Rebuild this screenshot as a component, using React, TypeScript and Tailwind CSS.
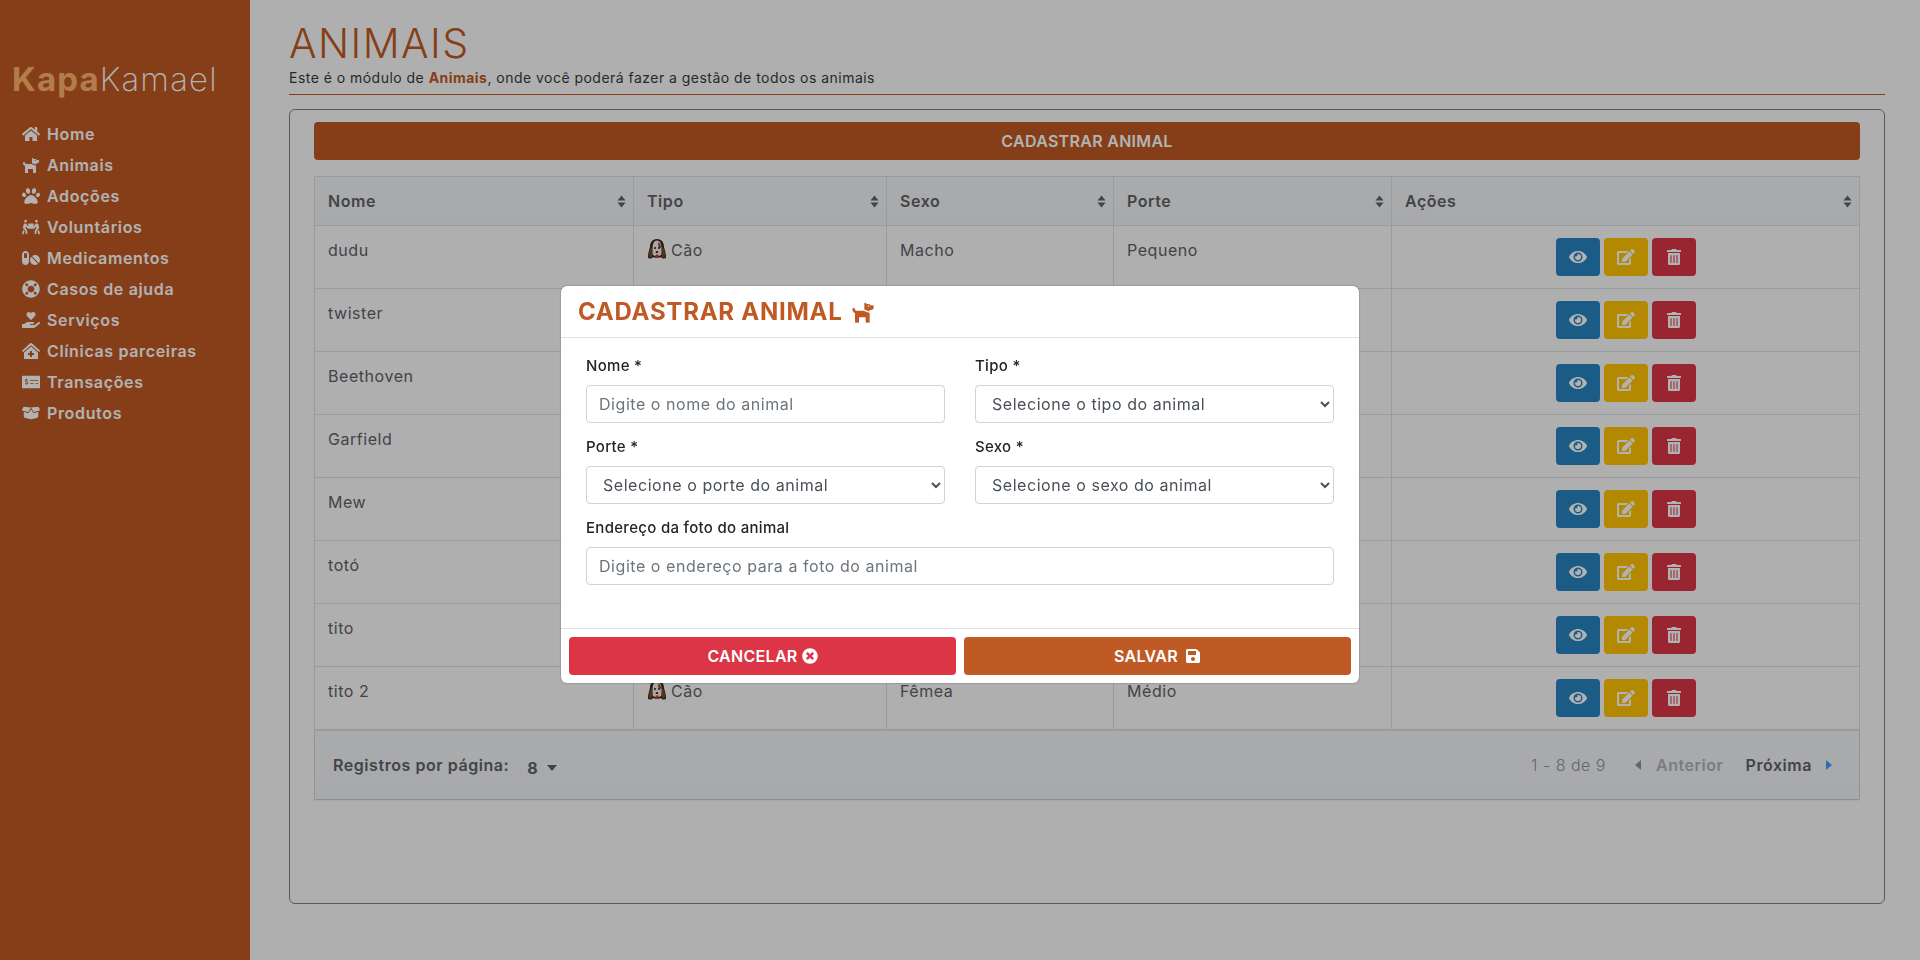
import React from "react";
import {
  FaHome, FaDog, FaPaw, FaPeopleCarry, FaPills, FaLifeRing, FaHandHoldingHeart, FaClinicMedical,
  FaMoneyCheckAlt, FaBoxOpen, FaEye, FaEdit, FaTrashAlt, FaSave, FaTimesCircle,
} from "react-icons/fa";

const nav = [
  { label: "Home", Icon: FaHome },
  { label: "Animais", Icon: FaDog },
  { label: "Adoções", Icon: FaPaw },
  { label: "Voluntários", Icon: FaPeopleCarry },
  { label: "Medicamentos", Icon: FaPills },
  { label: "Casos de ajuda", Icon: FaLifeRing },
  { label: "Serviços", Icon: FaHandHoldingHeart },
  { label: "Clínicas parceiras", Icon: FaClinicMedical },
  { label: "Transações", Icon: FaMoneyCheckAlt },
  { label: "Produtos", Icon: FaBoxOpen },
];

const rows = [
  ["dudu", "Cão", "Macho", "Pequeno"],
  ["twister", "Cão", "Macho", "Médio"],
  ["Beethoven", "Cão", "Macho", "Grande"],
  ["Garfield", "Gato", "Macho", "Médio"],
  ["Mew", "Gato", "Fêmea", "Pequeno"],
  ["totó", "Cão", "Macho", "Pequeno"],
  ["tito", "Cão", "Macho", "Médio"],
  ["tito 2", "Cão", "Fêmea", "Médio"],
];

const cols = ["w-[319px]", "w-[253px]", "w-[227px]", "w-[278px]", "flex-1"];
const heads = ["Nome", "Tipo", "Sexo", "Porte", "Ações"];

function SortIcon() {
  return (
    <svg width="9" height="13" viewBox="0 0 9 13" className="shrink-0">
      <path d="M4.5 0.5 L8.5 5.5 H0.5 Z M4.5 12.5 L8.5 7.5 H0.5 Z" fill="#606266" />
    </svg>
  );
}

function DogFace() {
  return (
    <svg width="20" height="22" viewBox="0 0 20 22" className="shrink-0">
      <path d="M10 1 C5 1 3 5 3 9 C2 12 1 16 1 19 C1 21 5 21 6 19 C7 20 13 20 14 19 C15 21 19 21 19 19 C19 16 18 12 17 9 C17 5 15 1 10 1 Z" fill="#3a2418" />
      <path d="M10 2.5 C7 2.5 5.5 6 5.5 10 L5.5 16 C6.5 19 13.5 19 14.5 16 L14.5 10 C14.5 6 13 2.5 10 2.5 Z" fill="#f2ede6" />
      <path d="M2.5 12 C2 15 2 18 2.5 19.5 C3.5 20 5 19.5 5.2 18 L5 9 Z M17.5 12 C18 15 18 18 17.5 19.5 C16.5 20 15 19.5 14.8 18 L15 9 Z" fill="#7b4a2a" />
      <path d="M11 4 C13 5 14 7 14 10 L11.5 9 Z" fill="#7b4a2a" />
      <circle cx="8" cy="10" r="1" fill="#222" />
      <circle cx="12" cy="10" r="1" fill="#222" />
      <ellipse cx="10" cy="14" rx="1.3" ry="1" fill="#222" />
      <circle cx="10" cy="18" r="1.7" fill="#d33" />
    </svg>
  );
}

function Field({ label, children }: { label: string; children: React.ReactNode }) {
  return (
    <div className="flex flex-col">
      <label className="h-[21px] text-[15px] leading-[21px] font-medium text-[#212529] tracking-[0.3px]">{label}</label>
      <div className="mt-[9px]">{children}</div>
    </div>
  );
}

const inputClass =
  "block w-full h-[38px] rounded-[4px] border border-[#ced4da] bg-white px-[12px] text-[16px] text-[#495057] tracking-[0.55px] placeholder:text-[#6c757d] outline-none";

function Select({ text }: { text: string }) {
  return (
    <select className={inputClass + " pl-[12px] pr-[2px]"} defaultValue="">
      <option value="">{text}</option>
    </select>
  );
}

export default function App() {
  return (
    <div className="relative flex h-screen w-full overflow-hidden bg-[#fbfbfb] font-['Inter','Noto_Sans',sans-serif]">
      <aside className="w-[250px] shrink-0 bg-[#c05a24] text-white">
        <div className="pt-[56px] pl-[12px] h-[122px] text-[33px] leading-[46px] tracking-[1.15px] whitespace-nowrap">
          <span className="font-bold text-[#ffb46a]">Kapa</span>
          <span className="font-extralight text-white">Kamael</span>
        </div>
        <ul className="flex flex-col gap-[7px] pl-[22px]">
          {nav.map(({ label, Icon }) => (
            <li key={label} className="flex h-[24px] items-center gap-[7px] text-[16px] font-semibold tracking-[0.65px] whitespace-nowrap">
              <Icon size={18} className="shrink-0" />
              <span>{label}</span>
            </li>
          ))}
        </ul>
      </aside>

      <main className="flex min-w-0 flex-1 flex-col pl-[39px] pr-[35px]">
        <div className="border-b border-[#c05a24] h-[95px]">
          <h1 className="pt-[24px] text-[41px] leading-[39px] font-light text-[#c05a24] tracking-[1.4px]">ANIMAIS</h1>
          <p className="mt-[5px] text-[14px] leading-[20px] text-[#3a3a3a] tracking-[0.47px]">
            Este é o módulo de <strong className="font-bold text-[#c05a24]">Animais</strong>, onde você poderá fazer a gestão de todos os animais
          </p>
        </div>

        <section className="mt-[14px] h-[795px] rounded-[6px] border border-[#808080] px-[24px] pt-[12px]">
          <button className="block h-[38px] w-[1546px] rounded-[4px] bg-[#c05a24] text-[16px] font-semibold text-white tracking-[0.3px]">
            CADASTRAR ANIMAL
          </button>

          <div className="mt-[16px] w-[1546px] border border-[#dcdfe6] text-[16px] text-[#606266]">
            <div className="flex h-[49px] border-b border-[#dcdfe6] bg-gradient-to-b from-[#f4f5f8] to-[#f1f3f6]">
              {heads.map((h, i) => (
                <div key={h} className={`${cols[i]} flex items-center justify-between px-[13px] pr-[7px] font-semibold tracking-[0.55px] ${i < 4 ? "border-r border-[#dcdfe6]" : ""}`}>
                  <span>{h}</span>
                  <SortIcon />
                </div>
              ))}
            </div>
            {rows.map((r) => (
              <div key={r[0]} className="flex h-[63px] border-b border-[#dcdfe6]">
                <div className={`${cols[0]} border-r border-[#dcdfe6] pl-[13px] pt-[12px] leading-[24px] tracking-[0.55px]`}>{r[0]}</div>
                <div className={`${cols[1]} flex items-start gap-[4px] border-r border-[#dcdfe6] pl-[13px] pt-[12px] leading-[24px] tracking-[0.55px]`}>
                  <DogFace />
                  <span>{r[1]}</span>
                </div>
                <div className={`${cols[2]} border-r border-[#dcdfe6] pl-[13px] pt-[12px] leading-[24px] tracking-[0.55px]`}>{r[2]}</div>
                <div className={`${cols[3]} border-r border-[#dcdfe6] pl-[13px] pt-[12px] leading-[24px] tracking-[0.55px]`}>{r[3]}</div>
                <div className="flex flex-1 items-start justify-center gap-[4px] pt-[12px]">
                  <button className="flex h-[38px] w-[44px] items-center justify-center rounded-[4px] bg-[#2684bf] text-white"><FaEye size={18} /></button>
                  <button className="flex h-[38px] w-[44px] items-center justify-center rounded-[4px] bg-[#ffc400] text-white"><FaEdit size={18} /></button>
                  <button className="flex h-[38px] w-[44px] items-center justify-center rounded-[4px] bg-[#dc3545] text-white"><FaTrashAlt size={16} /></button>
                </div>
              </div>
            ))}
            <div className="flex h-[70px] items-center justify-between border-t-2 border-[#dcdfe6] -mt-px bg-gradient-to-b from-[#f4f5f8] to-[#f1f3f6] pl-[18px] pr-[27px] shadow-[0_1px_2px_rgba(0,0,0,0.15)]">
              <div className="flex items-center font-semibold tracking-[0.55px]">
                <span>Registros por página:</span>
                <span className="ml-[18px] mt-[6px] font-bold text-[#606266]">8</span>
                <span className="ml-[9px] mt-[6px] h-0 w-0 border-x-[5.5px] border-t-[6px] border-x-transparent border-t-[#606266]" />
              </div>
              <div className="flex items-center">
                <span className="font-light tracking-[0.5px] text-[#909399]">1 - 8 de 9</span>
                <span className="ml-[29px] h-0 w-0 border-y-[5.5px] border-r-[6px] border-y-transparent border-r-[#909399]" />
                <span className="ml-[15px] font-semibold tracking-[0.55px] text-[#b0b2b6]">Anterior</span>
                <span className="ml-[22px] font-semibold tracking-[0.55px] text-[#606266]">Próxima</span>
                <span className="ml-[14px] h-0 w-0 border-y-[5.5px] border-l-[6px] border-y-transparent border-l-[#409eff]" />
              </div>
            </div>
          </div>
        </section>
      </main>

      <div className="fixed inset-0 flex items-start justify-center bg-black/30 pt-[286px]">
        <div className="w-[798px] rounded-[6px] bg-white shadow-[0_0_2px_rgba(0,0,0,0.4)]">
          <div className="flex h-[52px] items-center gap-[8px] border-b border-[#dee2e6] pl-[17px] text-[24px] font-bold text-[#c05a24] tracking-[0.75px]">
            <span>CADASTRAR ANIMAL</span>
            <FaDog size={24} />
          </div>
          <div className="grid grid-cols-2 gap-x-[30px] gap-y-[13px] px-[25px] pt-[17px] h-[291px] content-start border-b border-[#dee2e6]">
            <Field label="Nome *"><input className={inputClass} placeholder="Digite o nome do animal" /></Field>
            <Field label="Tipo *"><Select text="Selecione o tipo do animal" /></Field>
            <Field label="Porte *"><Select text="Selecione o porte do animal" /></Field>
            <Field label="Sexo *"><Select text="Selecione o sexo do animal" /></Field>
            <div className="col-span-2">
              <Field label="Endereço da foto do animal"><input className={inputClass} placeholder="Digite o endereço para a foto do animal" /></Field>
            </div>
          </div>
          <div className="flex gap-[8px] px-[8px] pt-[8px] pb-[8px]">
            <button className="flex h-[38px] flex-1 items-center justify-center gap-[4px] rounded-[4px] bg-[#dc3545] text-[16px] font-semibold text-white tracking-[0.3px]">
              CANCELAR <FaTimesCircle size={16} />
            </button>
            <button className="flex h-[38px] flex-1 items-center justify-center gap-[7px] rounded-[4px] bg-[#c05a24] text-[16px] font-semibold text-white tracking-[0.3px]">
              SALVAR <FaSave size={16} />
            </button>
          </div>
        </div>
      </div>
    </div>
  );
}
